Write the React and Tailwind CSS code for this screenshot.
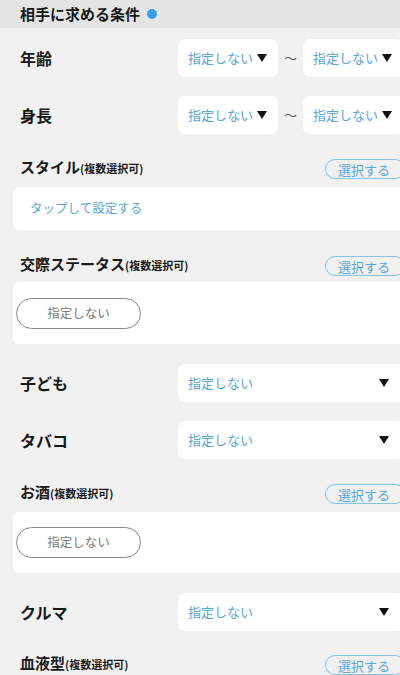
const FONT = { fontFamily: '"Noto Sans CJK JP", "Noto Sans", sans-serif' }

function Triangle() {
  return (
    <svg width="10" height="8" viewBox="0 0 10 8" className="shrink-0">
      <path d="M0 0h10L5 8z" fill="#111" />
    </svg>
  )
}

function SmallSelect() {
  return (
    <div className="w-[100px] h-[38px] shrink-0 bg-white rounded-[7px] flex items-center pl-[10px] gap-[4px]">
      <span className="text-[13px] text-[#5aa6d6]">指定しない</span>
      <Triangle />
    </div>
  )
}

function RangeRow({ label, className = '' }) {
  return (
    <div className={`flex items-center h-[38px] ${className}`}>
      <div className="w-[178px] shrink-0 pl-[20px] text-[16px] font-bold text-[#1a1a1a]">{label}</div>
      <SmallSelect />
      <div className="w-[25px] shrink-0 text-center text-[13px] text-[#555]">～</div>
      <SmallSelect />
    </div>
  )
}

function SelectRow({ label, className = '' }) {
  return (
    <div className={`flex items-center h-[38px] ${className}`}>
      <div className="w-[178px] shrink-0 pl-[20px] text-[16px] font-bold text-[#1a1a1a]">{label}</div>
      <div className="w-[226px] h-[38px] shrink-0 bg-white rounded-[7px] flex items-center justify-between pl-[10px] pr-[15px]">
        <span className="text-[13px] text-[#5aa6d6]">指定しない</span>
        <Triangle />
      </div>
    </div>
  )
}

function SectionHead({ label, className = '' }) {
  return (
    <div className={`flex items-center justify-between h-[20px] pl-[20px] ${className}`}>
      <div className="flex items-baseline text-[#1a1a1a] font-bold -mt-[4px]">
        <span className="text-[15px]">{label}</span>
        <span className="text-[11px]">(複数選択可)</span>
      </div>
      <div className="w-[80px] h-[20px] shrink-0 border border-[#86c3e4] rounded-full flex items-center pl-[12px] text-[13px] text-[#5aa6d6] leading-none">
        選択する
      </div>
    </div>
  )
}

function NoneCard({ className = '' }) {
  return (
    <div className={`ml-[13px] w-[392px] bg-white rounded-[6px] ${className}`}>
      <div className="ml-[3px] w-[125px] h-[31px] border border-[#8a8a8a] rounded-full flex items-center justify-center text-[12.5px] text-[#777]">
        指定しない
      </div>
    </div>
  )
}

export default function App() {
  return (
    <div className="w-[400px] h-[675px] overflow-hidden bg-[#f1f1f1]" style={FONT}>
      <div className="w-[405px]">
        {/* Header */}
        <div className="h-[28px] bg-[#e4e4e4] flex items-center pl-[20px] gap-[7px]">
          <span className="text-[15px] font-bold text-[#1a1a1a]">相手に求める条件</span>
          <span className="w-[10px] h-[10px] rounded-full bg-[#3a9fe6]" />
        </div>

        <RangeRow label="年齢" className="mt-[11px]" />
        <RangeRow label="身長" className="mt-[19px]" />

        <SectionHead label="スタイル" className="mt-[25px]" />
        <div className="mt-[8px] ml-[13px] w-[392px] h-[43px] bg-white rounded-[6px] flex items-center pl-[17px] text-[12.5px] text-[#5aa6d6]">
          タップして設定する
        </div>

        <SectionHead label="交際ステータス" className="mt-[26px]" />
        <NoneCard className="mt-[6px] pt-[16px] pb-[15px]" />

        <SelectRow label="子ども" className="mt-[20px]" />
        <SelectRow label="タバコ" className="mt-[19px]" />

        <SectionHead label="お酒" className="mt-[25px]" />
        <NoneCard className="mt-[8px] pt-[15px] pb-[15px]" />

        <SelectRow label="クルマ" className="mt-[20px]" />

        <SectionHead label="血液型" className="mt-[24px]" />
      </div>
    </div>
  )
}
